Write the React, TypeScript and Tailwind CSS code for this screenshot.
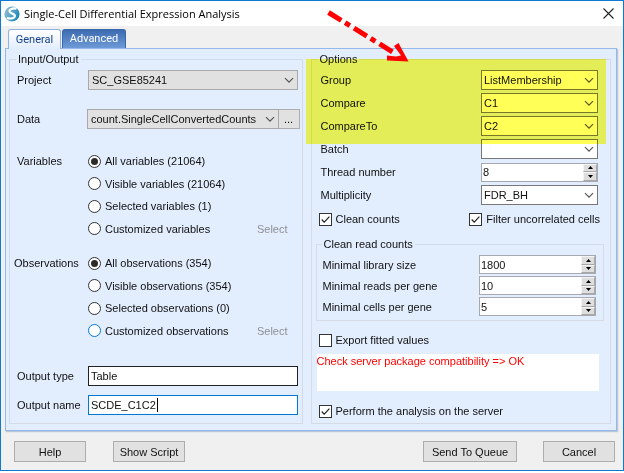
import React, { useState } from "react";

function Chevron() {
  return (
    <svg
      className="pointer-events-none absolute top-1/2 right-1 -mt-[3px] h-[7px] w-[10px]"
      viewBox="0 0 10 7"
      fill="none"
      stroke="#555"
      strokeWidth="1.2"
    >
      <path d="M1 1.2 5 5.2 9 1.2" />
    </svg>
  );
}

type ComboProps = { id: string; value: string; className: string; label?: string };

function Combo({ id, value, className, label }: ComboProps) {
  return (
    <div className="relative h-5 min-w-0 flex-1">
      <select
        id={id}
        aria-label={label}
        defaultValue={value}
        className={`block h-5 w-full appearance-none border pr-4 leading-[14px] outline-none ${className}`}
      >
        <option>{value}</option>
      </select>
      <Chevron />
    </div>
  );
}

function SpinButton({ up, label, onClick }: { up: boolean; label: string; onClick: () => void }) {
  return (
    <button
      type="button"
      aria-label={label}
      onClick={onClick}
      className="flex min-h-0 flex-1 items-center justify-center border border-[#f4f4f4] border-r-[#a8a8a8] border-b-[#a8a8a8] bg-[#dedede]"
    >
      <svg className="h-[3px] w-[5px]" viewBox="0 0 5 3">
        <path d={up ? "M2.5 0 5 3H0z" : "M0 0h5L2.5 3z"} fill="#000" />
      </svg>
    </button>
  );
}

function Spinner({ id, initial }: { id: string; initial: number }) {
  const [value, setValue] = useState(initial);
  return (
    <div className="flex h-[19px] w-[117px] border border-[#a6a9b0] bg-white">
      <input
        id={id}
        value={value}
        onChange={(e) => setValue(Number(e.target.value) || 0)}
        className="min-w-0 flex-1 bg-transparent pl-px leading-[14px] outline-none"
      />
      <div className="flex w-[14px] flex-col">
        <SpinButton up label="Increase" onClick={() => setValue(value + 1)} />
        <SpinButton up={false} label="Decrease" onClick={() => setValue(value - 1)} />
      </div>
    </div>
  );
}

function Check({ text, checked }: { text: string; checked?: boolean }) {
  return (
    <label className="flex h-[14px] items-center gap-1 whitespace-nowrap">
      <span className="relative block size-[13px]">
        <input
          type="checkbox"
          defaultChecked={checked}
          className="peer block size-[13px] appearance-none border border-[#333] bg-white"
        />
        <svg
          className="pointer-events-none absolute inset-0 hidden size-[13px] peer-checked:block"
          viewBox="0 0 13 13"
          fill="none"
          stroke="#222"
          strokeWidth="1.2"
        >
          <path d="M2.7 6.5 5.2 9.2 10.4 3.6" />
        </svg>
      </span>
      {text}
    </label>
  );
}

type RadioProps = { name: string; text: string; checked?: boolean; hot?: boolean; select?: boolean };

function Radio({ name, text, checked, hot, select }: RadioProps) {
  return (
    <div className="flex items-center justify-between pr-[14px]">
      <label className="flex items-center gap-1 whitespace-nowrap">
        <span className="relative block size-[13px]">
          <input
            type="radio"
            name={name}
            defaultChecked={checked}
            className={`peer block size-[13px] appearance-none rounded-full border bg-white ${hot ? "border-[#0078d7]" : "border-[#333]"}`}
          />
          <span className="pointer-events-none absolute inset-[3px] hidden rounded-full bg-[#2b2b2b] peer-checked:block" />
        </span>
        {text}
      </label>
      {select && (
        <button type="button" disabled className="text-[#8d9096]">
          Select
        </button>
      )}
    </div>
  );
}

function RadioBlock({ title, wide, options }: { title: string; wide?: boolean; options: RadioProps[] }) {
  return (
    <div role="radiogroup" aria-label={title} className="flex h-[90px]">
      <div className={`flex h-[22px] items-center ${wide ? "w-[74px]" : "w-[71px]"}`}>{title}</div>
      <div className="grid flex-1 grid-rows-4">
        {options.map((o) => (
          <Radio key={o.text} {...o} />
        ))}
      </div>
    </div>
  );
}

const box = "min-w-0 border border-[#d5dbe4]";
const white = "border-[#777] bg-white pl-[2px]";
const grey = "border-[#a9a9a9] bg-[#e1e1e1] pl-[3px]";
const pushButton =
  "flex h-[21px] items-center justify-center whitespace-nowrap border border-[#adadad] bg-[#e1e1e1]";

const optionRows = [
  { id: "group", label: "Group", value: "ListMembership" },
  { id: "compare", label: "Compare", value: "C1" },
  { id: "compareTo", label: "CompareTo", value: "C2" },
  { id: "batch", label: "Batch", value: "" },
  { id: "threads", label: "Thread number", value: "8", spin: true },
  { id: "multiplicity", label: "Multiplicity", value: "FDR_BH" },
];

const cleanRows = [
  { id: "library", label: "Minimal library size", value: 1800 },
  { id: "reads", label: "Minimal reads per gene", value: 10 },
  { id: "cells", label: "Minimal cells per gene", value: 5 },
];

function InputOutput() {
  return (
    <fieldset className={`${box} pb-2`}>
      <legend className="ml-[6px] px-[2px]">Input/Output</legend>
      <div className="flex items-center pt-1 pr-1 pl-[7px]">
        <label htmlFor="project" className="w-[71px]">
          Project
        </label>
        <Combo id="project" value="SC_GSE85241" className={grey} />
      </div>
      <div className="mt-[19px] flex items-center pr-[2px] pl-[7px]">
        <label htmlFor="data" className="w-[70px]">
          Data
        </label>
        <Combo id="data" value="count.SingleCellConvertedCounts" className={grey} />
        <button
          type="button"
          aria-label="Browse data"
          className="h-5 w-[21px] border border-l-0 border-[#adadad] bg-[#e1e1e1] leading-[14px]"
        >
          ...
        </button>
      </div>
      <div className="mt-[21px] pl-[7px]">
        <RadioBlock
          title="Variables"
          options={[
            { name: "variables", text: "All variables (21064)", checked: true },
            { name: "variables", text: "Visible variables (21064)" },
            { name: "variables", text: "Selected variables (1)" },
            { name: "variables", text: "Customized variables", select: true },
          ]}
        />
      </div>
      <div className="mt-3 pl-1">
        <RadioBlock
          title="Observations"
          wide
          options={[
            { name: "observations", text: "All observations (354)", checked: true },
            { name: "observations", text: "Visible observations (354)" },
            { name: "observations", text: "Selected observations (0)" },
            { name: "observations", text: "Customized observations", hot: true, select: true },
          ]}
        />
      </div>
      <div className="mt-6 flex items-center pr-1 pl-[7px]">
        <label htmlFor="outputType" className="w-[71px]">
          Output type
        </label>
        <input
          id="outputType"
          defaultValue="Table"
          className="h-5 min-w-0 flex-1 border border-[#222] bg-white pl-[2px] leading-[14px] outline-none"
        />
      </div>
      <div className="mt-[9px] flex items-center pr-1 pl-[7px]">
        <label htmlFor="outputName" className="w-[71px]">
          Output name
        </label>
        <div className="relative h-5 min-w-0 flex-1">
          <input
            id="outputName"
            defaultValue="SCDE_C1C2"
            className="block h-5 w-full border border-[#0078d7] bg-white pl-[2px] leading-[14px] outline-none"
          />
          <span className="absolute top-[3px] left-[69px] h-[14px] w-px bg-black" />
        </div>
      </div>
    </fieldset>
  );
}

function Options() {
  return (
    <div className="relative flex min-w-0 flex-col">
      <fieldset className={`${box} flex-1`}>
        <legend className="ml-[6px] px-[2px]">Options</legend>
        <div className="flex flex-col gap-[3px] pt-1 pr-3 pl-[9px]">
          {optionRows.map((r) => (
            <div key={r.id} className="flex h-5 items-center justify-between">
              <label htmlFor={r.id}>{r.label}</label>
              <div className="flex w-[117px]">
                {r.spin ? (
                  <Spinner id={r.id} initial={Number(r.value)} />
                ) : (
                  <Combo id={r.id} value={r.value} className={white} />
                )}
              </div>
            </div>
          ))}
        </div>
        <div className="mt-[7px] flex justify-between pr-[10px] pl-[7px]">
          <Check text="Clean counts" checked />
          <Check text="Filter uncorrelated cells" checked />
        </div>
        <fieldset className={`${box} mt-[11px] mr-[6px] ml-1 pb-1`}>
          <legend className="ml-[5px] px-[2px]">Clean read counts</legend>
          <div className="flex flex-col gap-[2px] pt-1 pr-[7px] pl-[6px]">
            {cleanRows.map((r) => (
              <div key={r.id} className="flex items-center justify-between">
                <label htmlFor={r.id}>{r.label}</label>
                <Spinner id={r.id} initial={r.value} />
              </div>
            ))}
          </div>
        </fieldset>
        <div className="mt-3 pl-[7px]">
          <Check text="Export fitted values" />
        </div>
        <div className="mt-[7px] pr-[11px] pl-[5px]">
          <textarea
            readOnly
            aria-label="Server status"
            value="Check server package compatibility => OK"
            className="block h-[37px] w-full resize-none bg-white leading-[14px] text-[#ff0000] outline-none"
          />
        </div>
        <div className="mt-[13px] pl-[7px]">
          <Check text="Perform the analysis on the server" checked />
        </div>
      </fieldset>
      <div className="pointer-events-none absolute top-[7px] right-[5px] -left-[5px] h-[85px] bg-[#ffff58] mix-blend-multiply" />
      <svg
        className="pointer-events-none absolute -top-[42px] left-[14px] h-[56px] w-[86px]"
        viewBox="325 10 86 56"
        fill="none"
        stroke="#ff0000"
      >
        <path d="M328.500 12.500 396 54" strokeWidth="5" strokeDasharray="15 4.500 5.500 5" />
        <path
          d="M387 55.500 396 56.500 401 55.500 394 46 398.500 43 408.500 61.500 387 60.500z"
          fill="#ff0000"
          stroke="none"
        />
      </svg>
    </div>
  );
}

export default function App() {
  return (
    <div className="bg-white pb-px font-['Liberation_Sans',Arial,sans-serif] text-[11px] leading-[14px] text-[#111]">
      <main className="border border-[#0f7ad4] bg-[#f0f0f0]">
        <header className="flex h-[25px] items-center bg-white pr-[9px] pl-[3px]">
          <svg className="size-4" viewBox="0 0 16 16" fill="none">
            <defs>
              <linearGradient id="logo" x1="0" y1="0.3" x2="1" y2="0.7">
                <stop offset="0" stopColor="#8fbdd0" />
                <stop offset="0.5" stopColor="#55a3c8" />
                <stop offset="1" stopColor="#1686b8" />
              </linearGradient>
            </defs>
            <circle cx="8" cy="8" r="7.6" fill="url(#logo)" />
            <path
              d="M12.5 2.6C8.500 1.900 5.200 3.200 5.600 5.400c.5 2.300 5.600 2.300 5.300 4.700-.3 2.200-4.200 3-8 1.900"
              stroke="#fff"
              strokeWidth="2.2"
            />
          </svg>
          <h1 className="ml-1 flex-1 font-['Open_Sans','Noto_Sans',sans-serif] text-[11px] leading-4 text-black">
            Single-Cell Differential Expression Analysis
          </h1>
          <button type="button" aria-label="Close" className="size-[11px]">
            <svg className="size-[11px]" viewBox="0 0 11 11" stroke="#222" strokeWidth="1.1">
              <path d="M.5.5l10 10M10.500.5l-10 10" />
            </svg>
          </button>
        </header>

        <div className="pr-[6px] pl-1">
          <div
            role="tablist"
            className="flex h-[22px] items-end gap-px pl-[3px] font-[Roboto,sans-serif] text-[11px]"
          >
            <button
              type="button"
              role="tab"
              aria-selected="true"
              className="relative -mb-px h-5 w-[53px] rounded-t-[3px] border border-b-0 border-[#8db2e3] bg-linear-to-b from-white to-[#e2edfe] text-[#15428b]"
            >
              General
            </button>
            <button
              type="button"
              role="tab"
              aria-selected="false"
              className="h-[19px] w-16 rounded-t-[3px] border border-b-0 border-[#3a66ab] bg-linear-to-b from-[#3c6bb0] to-[#6e9ad6] text-white"
            >
              Advanced
            </button>
          </div>
          <div className="grid grid-cols-[294fr_301fr] gap-2 border border-[#94b8ea] bg-[#e2edfe] pt-[3px] pr-[5px] pb-[6px] pl-[3px] shadow-[1px_1px_1px_#b9c6d8]">
            <InputOutput />
            <Options />
          </div>
        </div>

        <footer className="flex justify-between pt-[10px] pr-2 pb-2 pl-[13px]">
          <div className="flex gap-[27px]">
            <button type="button" className={`${pushButton} w-[72px]`}>
              Help
            </button>
            <button type="button" className={`${pushButton} w-[72px]`}>
              Show Script
            </button>
          </div>
          <div className="flex gap-[26px]">
            <button type="button" className={`${pushButton} w-[94px]`}>
              Send To Queue
            </button>
            <button type="button" className={`${pushButton} w-[72px]`}>
              Cancel
            </button>
          </div>
        </footer>
      </main>
    </div>
  );
}
